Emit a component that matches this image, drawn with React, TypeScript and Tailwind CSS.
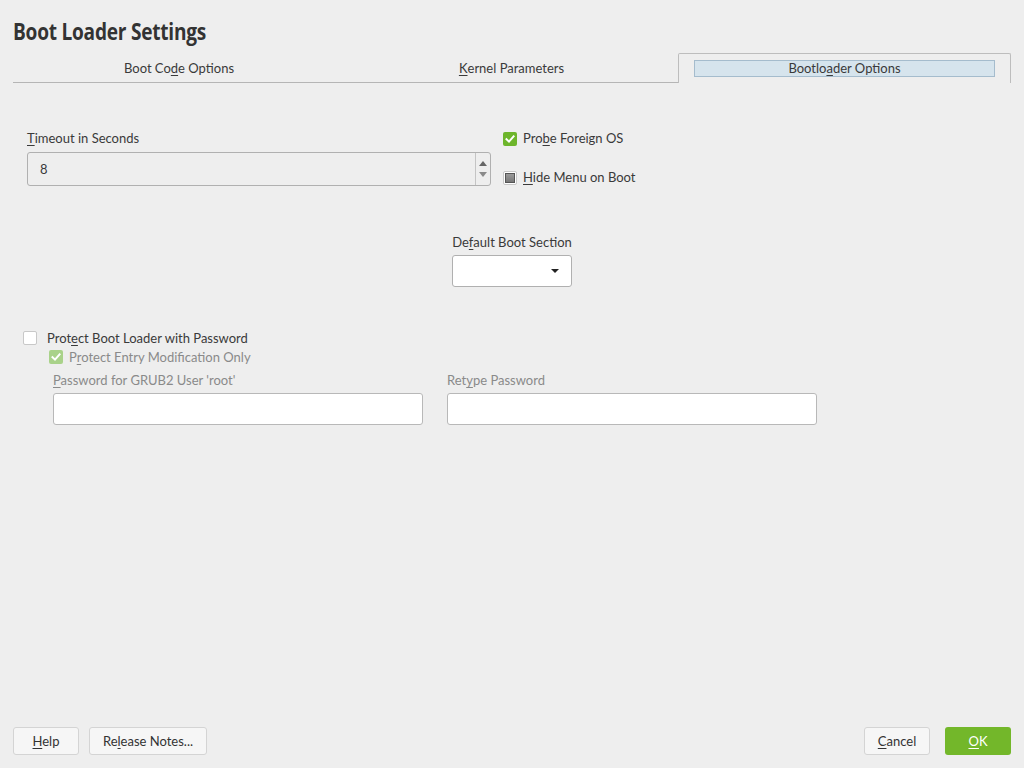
import React from "react";

const font = { fontFamily: '"Source Sans Pro", Lato, "Noto Sans", sans-serif' };

function U({ children }: { children: React.ReactNode }) {
  return <span className="underline underline-offset-2 decoration-1">{children}</span>;
}

function Check() {
  return (
    <svg width="10" height="10" viewBox="0 0 10 10">
      <path d="M1.5 5.2 L4 7.6 L8.6 2.4" fill="none" stroke="white" strokeWidth="2" strokeLinecap="square" />
    </svg>
  );
}

export default function App() {
  return (
    <div className="w-[1024px] h-[768px] bg-[#eeeeee] text-[#3a3a3a] text-[13px] flex flex-col overflow-hidden" style={font}>
      <div className="pl-[13px] pt-[15px] h-[53px]">
        <h1 className="text-[24px] font-bold leading-[32px] text-[#333] tracking-[-0.3px] origin-left scale-x-[0.795] whitespace-nowrap" style={{ fontFamily: '"Open Sans", sans-serif' }}>
          Boot Loader Settings
        </h1>
      </div>
      {/* Tabs */}
      <div className="flex mx-[13px] h-[30px]">
        <div className="w-[332px] border-b border-[#b5b5b5] flex items-center justify-center pt-[3px]">
          Boot Co<U>d</U>e Options
        </div>
        <div className="w-[333px] border-b border-[#b5b5b5] flex items-center justify-center pt-[3px]">
          <U>K</U>ernel Parameters
        </div>
        <div className="flex-1 border border-b-0 border-[#bdbdbd] rounded-t-[2px] pt-[6px] px-[15px]">
          <div className="h-[17px] bg-[#d6e4ed] border border-[#a5bccd] flex items-center justify-center leading-none">
            Bootlo<U>a</U>der Options
          </div>
        </div>
      </div>

      {/* Content */}
      <div className="flex-1 flex flex-col">
        <div className="flex pt-[47px]">
          <div className="pl-[27px] w-[491px]">
            <div className="leading-[16px]"><U>T</U>imeout in Seconds</div>
            <div className="mt-[6px] h-[34px] border border-[#b0b0b0] rounded-[3px] flex bg-[#eeeeee]">
              <div className="flex-1 flex items-center pl-[12px] pt-[1px]">8</div>
              <div className="w-[15px] border-l border-[#c4c4c4] flex flex-col items-center justify-center gap-[6px]">
                <div className="w-0 h-0 border-l-[4px] border-r-[4px] border-b-[5px] border-l-transparent border-r-transparent border-b-[#666]" />
                <div className="w-0 h-0 border-l-[4px] border-r-[4px] border-t-[5px] border-l-transparent border-r-transparent border-t-[#8a8a8a]" />
              </div>
            </div>
          </div>
          <div className="pl-[12px] -mt-[1px]">
            <div className="flex items-center h-[20px]">
              <div className="w-[14px] h-[14px] rounded-[2px] bg-[#6db52b] flex items-center justify-center"><Check /></div>
              <span className="ml-[6px]">Pro<U>b</U>e Foreign OS</span>
            </div>
            <div className="flex items-center h-[20px] mt-[19px]">
              <div className="w-[14px] h-[14px] rounded-[2px] border border-[#c8c8c8] bg-white flex items-center justify-center">
                <div className="w-[10px] h-[10px] border border-[#555] bg-gradient-to-b from-[#9a9a9a] to-[#777]" />
              </div>
              <span className="ml-[6px]"><U>H</U>ide Menu on Boot</span>
            </div>
          </div>
        </div>

        <div className="flex flex-col items-center mt-[46px]">
          <div className="leading-[16px]">De<U>f</U>ault Boot Section</div>
          <div className="mt-[5px] w-[120px] h-[32px] border border-[#b0b0b0] rounded-[3px] bg-white flex items-center justify-end pr-[12px]">
            <div className="w-0 h-0 border-l-[4px] border-r-[4px] border-t-[4px] border-l-transparent border-r-transparent border-t-[#222]" />
          </div>
        </div>

        <div className="pl-[23px] mt-[43px]">
          <div className="flex items-center h-[16px]">
            <div className="w-[14px] h-[14px] rounded-[2px] border border-[#c8c8c8] bg-white" />
            <span className="ml-[10px] pt-[1px]">Prot<U>e</U>ct Boot Loader with Password</span>
          </div>
          <div className="flex items-center h-[16px] mt-[3px] pl-[26px] text-[#8a8a8a]">
            <div className="w-[14px] h-[14px] rounded-[2px] bg-[#a9d28a] flex items-center justify-center"><Check /></div>
            <span className="ml-[6px] pt-[1px]">P<U>r</U>otect Entry Modification Only</span>
          </div>
          <div className="flex pl-[30px] mt-[7px] gap-[24px] text-[#8a8a8a]">
            <div className="w-[370px]">
              <div className="leading-[16px]"><U>P</U>assword for GRUB2 User 'root'</div>
              <div className="mt-[5px] h-[32px] border border-[#b8b8b8] rounded-[3px] bg-white" />
            </div>
            <div className="w-[370px]">
              <div className="leading-[16px]">Ret<U>y</U>pe Password</div>
              <div className="mt-[5px] h-[32px] border border-[#b8b8b8] rounded-[3px] bg-white" />
            </div>
          </div>
        </div>
      </div>

      {/* Footer */}
      <div className="flex items-center px-[13px] h-[28px] mb-[13px]">
        <button className="w-[66px] h-[28px] border border-[#d4d4d4] rounded-[3px] bg-[#f6f6f6] text-[#333] pt-[1px]"><U>H</U>elp</button>
        <button className="ml-[10px] w-[118px] h-[28px] border border-[#d4d4d4] rounded-[3px] bg-[#f6f6f6] text-[#333] pt-[1px]">Re<U>l</U>ease Notes...</button>
        <div className="flex-1" />
        <button className="w-[66px] h-[28px] border border-[#d4d4d4] rounded-[3px] bg-[#f6f6f6] text-[#333] pt-[1px]"><U>C</U>ancel</button>
        <button className="ml-[15px] w-[66px] h-[28px] rounded-[3px] bg-[#73b72a] text-white pt-[1px]"><U>O</U>K</button>
      </div>
    </div>
  );
}
